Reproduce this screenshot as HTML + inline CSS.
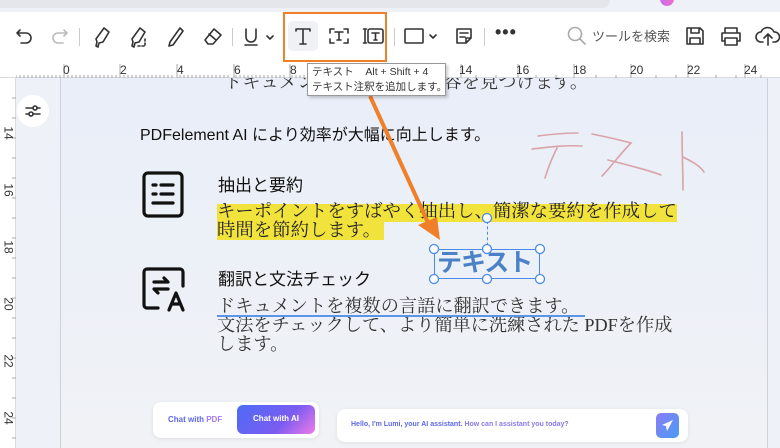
<!DOCTYPE html>
<html><head><meta charset="utf-8"><style>
*{margin:0;padding:0;box-sizing:border-box}
body{width:780px;height:448px;overflow:hidden;background:#eef1f7;position:relative;font-family:"Liberation Sans","Noto Sans CJK JP",sans-serif;color:#222}
.abs{position:absolute}
.tb{left:0;top:12px;width:780px;height:50px;background:#fff}
.sep{width:1px;height:18px;background:#ccc;top:28px}
svg.i{position:absolute;fill:none;stroke:#333;stroke-width:1.6;stroke-linecap:round;stroke-linejoin:round}
.ruler{background:#fff}
.serif{font-family:"Liberation Serif","Noto Serif CJK SC",serif;white-space:nowrap}
</style></head><body>
<div class="abs" style="left:0;top:0;width:610px;height:8px;background:#e4e6eb;border-radius:0 0 8px 0"></div>
<div class="abs" style="left:660px;top:-8px;width:14px;height:14px;border-radius:50%;background:linear-gradient(90deg,#c86cf0,#f06cc8)"></div>
<div class="abs tb"></div>
<svg class="i" style="left:14px;top:26px" width="22" height="22" viewBox="0 0 22 22"><path d="M6 4 3 7l3 3M3 7h9a5 5 0 0 1 0 10H7"/></svg>
<svg class="i" style="left:48px;top:26px;stroke:#bbb" width="22" height="22" viewBox="0 0 22 22"><path d="M16 4l3 3-3 3M19 7h-9a5 5 0 0 0 0 10h5"/></svg>
<div class="abs sep" style="left:79px"></div>
<svg class="i" style="left:91px;top:25px" width="22" height="24" viewBox="0 0 22 24"><path d="M13 3l5 4-6 10-4 1-1 4-2-1 1-4-1-3z"/></svg>
<svg class="i" style="left:128px;top:25px" width="24" height="24" viewBox="0 0 24 24"><path d="M12 3l5 4-6 10-4 1-1 4-2-1 1-4-1-3z"/><path d="M17 14v7h-8" stroke-dasharray="2 2"/></svg>
<svg class="i" style="left:165px;top:25px" width="22" height="24" viewBox="0 0 22 24"><path d="M15 3l3 3-10 14-4 1 1-4z"/></svg>
<svg class="i" style="left:202px;top:26px" width="22" height="22" viewBox="0 0 22 22"><path d="M12 3l7 6-8 9H6l-3-4z M7 8l7 6"/></svg>
<div class="abs sep" style="left:232px"></div>
<svg class="i" style="left:242px;top:26px" width="34" height="22" viewBox="0 0 34 22"><path d="M4 3v8a5 5 0 0 0 10 0V3M3 19h12M25 10l3 3 3-3" /></svg>
<div class="abs" style="left:283px;top:12px;width:104px;height:50px;border:2px solid #f07f2a"></div>
<div class="abs" style="left:288px;top:21px;width:30px;height:30px;background:#f0f1f4;border-radius:5px"></div>
<svg class="i" style="left:292px;top:25px" width="22" height="22" viewBox="0 0 22 22"><path d="M4 4h14M11 4v15M8 19h6M4 4v2M18 4v2"/></svg>
<svg class="i" style="left:327px;top:25px" width="24" height="22" viewBox="0 0 24 22"><path d="M3 8V4h4M17 4h4v4M21 14v4h-4M7 18H3v-4"/><path d="M8 7h8M12 7v8M10 15h4"/></svg>
<svg class="i" style="left:362px;top:25px" width="24" height="22" viewBox="0 0 24 22"><rect x="6" y="4" width="15" height="14" rx="2"/><path d="M10 8h7M13.5 8v7M12 15h3M3 4v14M1.5 4h3M1.5 18h3"/></svg>
<div class="abs sep" style="left:394px"></div>
<svg class="i" style="left:403px;top:25px" width="40" height="22" viewBox="0 0 40 22"><rect x="2" y="4" width="18" height="14" rx="1"/><path d="M27 10l3 3 3-3"/></svg>
<svg class="i" style="left:453px;top:25px" width="22" height="22" viewBox="0 0 22 22"><path d="M4 4h14v9l-5 5H4z M7 8h8M7 12h5M13 18v-5h5"/></svg>
<div class="abs sep" style="left:484px"></div>
<div class="abs" style="left:495px;top:22px;font-size:18px;color:#333;letter-spacing:1px;font-weight:bold">•••</div>
<svg class="i" style="left:566px;top:25px;stroke:#aaa" width="22" height="22" viewBox="0 0 22 22"><circle cx="9" cy="9" r="6.5"/><path d="M14 14l5 5"/></svg>
<div class="abs" style="left:592px;top:26px;font-size:13px;color:#555">ツールを検索</div>
<svg class="i" style="left:684px;top:25px" width="22" height="22" viewBox="0 0 22 22"><path d="M3 3h13l3 3v13H3z M7 3v5h8V3 M6 19v-6h10v6"/></svg>
<svg class="i" style="left:719px;top:25px" width="24" height="22" viewBox="0 0 24 22"><path d="M6 7V3h12v4M6 16H3V8h18v8h-3M6 13h12v7H6z"/></svg>
<svg class="i" style="left:755px;top:24px" width="26" height="24" viewBox="0 0 26 24"><path d="M8 18H6a5 5 0 0 1 0-10 7 7 0 0 1 13 0 5 5 0 0 1 1 10h-2M13 21V11M9 14l4-4 4 4"/></svg>
<div class="abs ruler" style="left:0;top:62px;width:780px;height:16px;border-bottom:1px solid #d8dbe2"></div>
<svg class="abs" style="left:16px;top:62px" width="764" height="16">
<g stroke="#aaa" stroke-width="1">
<path d="M0 13v3M4 13v3M8 13v3M12 13v3M16 13v3M20 13v3M24 13v3M28 13v3M32 13v3M36 13v3M40 13v3M44 13v3M48 2v14M52 13v3M56 13v3M60 13v3M64 13v3M68 13v3M72 13v3M76 13v3M80 13v3M84 13v3M88 13v3M92 13v3M96 13v3M100 13v3M108 13v3M112 13v3M116 13v3M120 13v3M124 13v3M128 13v3M132 13v3M136 13v3M140 13v3M144 13v3M148 13v3M152 13v3M156 13v3M164 13v3M168 13v3M172 13v3M176 13v3M180 13v3M184 13v3M188 13v3M192 13v3M196 13v3M200 13v3M204 13v3M208 13v3M212 13v3M220 13v3M224 13v3M228 13v3M232 13v3M236 13v3M240 13v3M244 13v3M248 13v3M252 13v3M256 13v3M260 13v3M264 13v3M268 13v3M276 13v3M280 13v3M284 13v3M288 13v3" />
<path d="M104 2v14M161 2v14M218 2v14M274 2v14M388 2v14M445 2v14M502 2v14M558 2v14M615 2v14M672 2v14M729 2v14"/>
<path d="M400 13v3M420 13v3M460 13v3M480 13v3M520 13v3M540 13v3M580 13v3M600 13v3M640 13v3M660 13v3M700 13v3M720 13v3M745 13v3"/>
</g></svg>
<div class="abs" style="top:63px;left:0;width:780px;font-size:12px;color:#333">
<span class="abs" style="left:63px">0</span><span class="abs" style="left:120px">2</span><span class="abs" style="left:177px">4</span><span class="abs" style="left:234px">6</span><span class="abs" style="left:290px">8</span><span class="abs" style="left:459px">14</span><span class="abs" style="left:516px">16</span><span class="abs" style="left:573px">18</span><span class="abs" style="left:630px">20</span><span class="abs" style="left:687px">22</span><span class="abs" style="left:744px">24</span></div>
<div class="abs ruler" style="left:0;top:78px;width:16px;height:370px;border-right:1px solid #d8dbe2"></div>
<svg class="abs" style="left:0;top:78px" width="16" height="370"><g stroke="#aaa"><path d="M12 20h4M12 40h4M12 60h4M12 80h4M12 100h4M12 120h4M12 140h4M12 160h4M12 180h4M12 200h4M12 220h4M12 240h4M12 260h4M12 280h4M12 300h4M12 320h4M12 340h4M12 360h4"/></g></svg>
<div class="abs" style="left:0;top:78px;width:16px;font-size:12px;color:#333">
<span class="abs" style="left:2px;top:48px;transform:rotate(90deg)">14</span>
<span class="abs" style="left:2px;top:105px;transform:rotate(90deg)">16</span>
<span class="abs" style="left:2px;top:162px;transform:rotate(90deg)">18</span>
<span class="abs" style="left:2px;top:219px;transform:rotate(90deg)">20</span>
<span class="abs" style="left:2px;top:276px;transform:rotate(90deg)">22</span>
<span class="abs" style="left:2px;top:333px;transform:rotate(90deg)">24</span></div>
<div class="abs" style="left:60px;top:78px;width:708px;height:370px;background:linear-gradient(180deg,#e9eef8,#f0f2f6);border-left:1px solid #ccd1da;border-right:1px solid #ccd1da"></div>
<div class="abs" style="left:17px;top:95px;width:32px;height:32px;border-radius:50%;background:#fff"></div>
<svg class="i" style="left:23px;top:101px" width="20" height="20" viewBox="0 0 20 20"><path d="M3 7h14M3 13h14"/><circle cx="12" cy="7" r="2" fill="#fff"/><circle cx="8" cy="13" r="2" fill="#fff"/></svg>
<div class="abs serif" style="left:224px;top:68px;font-size:18.3px;color:#333;clip-path:inset(10px 0 0 0)">ドキュメントから必要な内容を見つけます。</div>
<div class="abs" style="left:140px;top:121px;font-size:16px;color:#111">PDFelement AI により効率が大幅に向上します。</div>
<svg class="abs" style="left:142px;top:171px" width="44" height="48" viewBox="0 0 44 48" fill="none" stroke="#111" stroke-width="3.2" stroke-linecap="round"><rect x="2" y="2" width="38" height="43" rx="4"/><path d="M11 14h3M19 14h12M11 23h3M19 23h12M11 32h20"/></svg>
<svg class="abs" style="left:142px;top:266px" width="48" height="48" viewBox="0 0 48 48" fill="none" stroke="#111" stroke-width="3.2" stroke-linecap="round" stroke-linejoin="round"><path d="M16 42H5a3 3 0 0 1-3-3V6a3 3 0 0 1 3-3h33a3 3 0 0 1 3 3v14"/><path d="M12 16h14l-4-4M26 23H12l4 4"/><path d="M27 44l7-17 7 17M30 38h8"/></svg>
<div class="abs" style="left:218px;top:171px;font-size:17px;color:#111">抽出と要約</div>
<div class="abs" style="left:217px;top:204px;width:460px;height:18px;background:#f2e23c"></div>
<div class="abs" style="left:217px;top:222px;width:167px;height:18px;background:#f2e23c"></div>
<div class="abs serif" style="left:217px;top:202px;font-size:18.4px;line-height:19px;color:#222">キーポイントをすばやく抽出し、簡潔な要約を作成して<br>時間を節約します。</div>
<div class="abs" style="left:218px;top:265px;font-size:17px;color:#111">翻訳と文法チェック</div>
<div class="abs serif" style="left:217px;top:297px;font-size:18.2px;line-height:19px;color:#333">ドキュメントを複数の言語に翻訳できます。<br>文法をチェックして、より簡単に洗練された PDFを作成<br>します。</div>
<div class="abs" style="left:217px;top:315px;width:368px;height:2px;background:#5b95e8"></div>
<svg class="abs" style="left:520px;top:125px" width="200" height="80" fill="none" stroke="#d9a3a8" stroke-width="1.6" stroke-linecap="round"><path d="M18 11c15-2 25-3 40-3M12 24c18-2 32-4 50-3M37 23c-5 10-9 20-12 30M72 9c15 3 28 6 39 9-12 12-20 24-29 33M88 35c20 5 40 10 53 15M162 7c0 20 1 40 1 58M163 32c10 5 17 9 21 15"/></svg>
<div class="abs" style="left:487px;top:221px;width:0;height:30px;border-left:1.5px dashed #4a8ae8"></div>
<div class="abs" style="left:434px;top:249px;width:106px;height:30px;border:1.5px solid #4a8ae8"></div>
<div class="abs" style="left:437px;top:248px;font-size:25px;font-weight:bold;color:#4b82c7;letter-spacing:-1px;line-height:30px">テキスト</div>
<svg class="abs" style="left:425px;top:210px" width="125" height="80"><g fill="#fff" stroke="#4a8ae8" stroke-width="1.3"><circle cx="62" cy="8" r="4.5"/><circle cx="9" cy="39" r="4.5"/><circle cx="62" cy="39" r="4.5"/><circle cx="115" cy="39" r="4.5"/><circle cx="9" cy="69" r="4.5"/><circle cx="62" cy="69" r="4.5"/><circle cx="115" cy="69" r="4.5"/></g></svg>
<svg class="abs" style="left:360px;top:90px" width="100" height="160"><path d="M10 6L70 137" stroke="#f07f2a" stroke-width="4"/><path d="M80 150L58 135 77 127z" fill="#f07f2a"/></svg>
<div class="abs" style="left:307px;top:63px;width:139px;height:33px;background:#fff;border:1px solid #999;box-shadow:2px 2px 3px rgba(0,0,0,.2);font-size:10.5px;color:#333;padding:1px 4px;line-height:15px;white-space:nowrap;overflow:hidden">テキスト&nbsp;&nbsp;&nbsp; Alt + Shift + 4<br>テキスト注釈を追加します。</div>
<div class="abs" style="left:153px;top:402px;width:166px;height:36px;background:#fff;border-radius:8px;box-shadow:0 1px 4px rgba(0,0,0,.08)"></div>
<div class="abs" style="left:168px;top:415px;font-size:8px;font-weight:bold;color:#5b67e8">Chat with <span style="color:#a37cf0">PDF</span></div>
<div class="abs" style="left:237px;top:405px;width:78px;height:29px;border-radius:6px;background:linear-gradient(135deg,#4d6cf6,#7a5cf0 60%,#f07ae8);color:#fff;font-size:8px;font-weight:bold;text-align:center;line-height:27px">Chat with AI</div>
<div class="abs" style="left:337px;top:409px;width:351px;height:33px;background:#fff;border-radius:8px;box-shadow:0 1px 4px rgba(0,0,0,.08)"></div>
<div class="abs" style="left:351px;top:421px;font-size:7px;font-weight:bold;color:#5b67e8">Hello, I'm Lumi, your AI assistant. <span style="color:#8a7ae8">How can I assistant you today?</span></div>
<div class="abs" style="left:656px;top:413px;width:23px;height:25px;border-radius:5px;background:linear-gradient(135deg,#8a7cf5,#4a9cf5)"></div>
<svg class="abs" style="left:661px;top:419px" width="13" height="13" viewBox="0 0 13 13"><path d="M12 1L1 6l4 1 1 5z" fill="#fff"/></svg>
</body></html>
